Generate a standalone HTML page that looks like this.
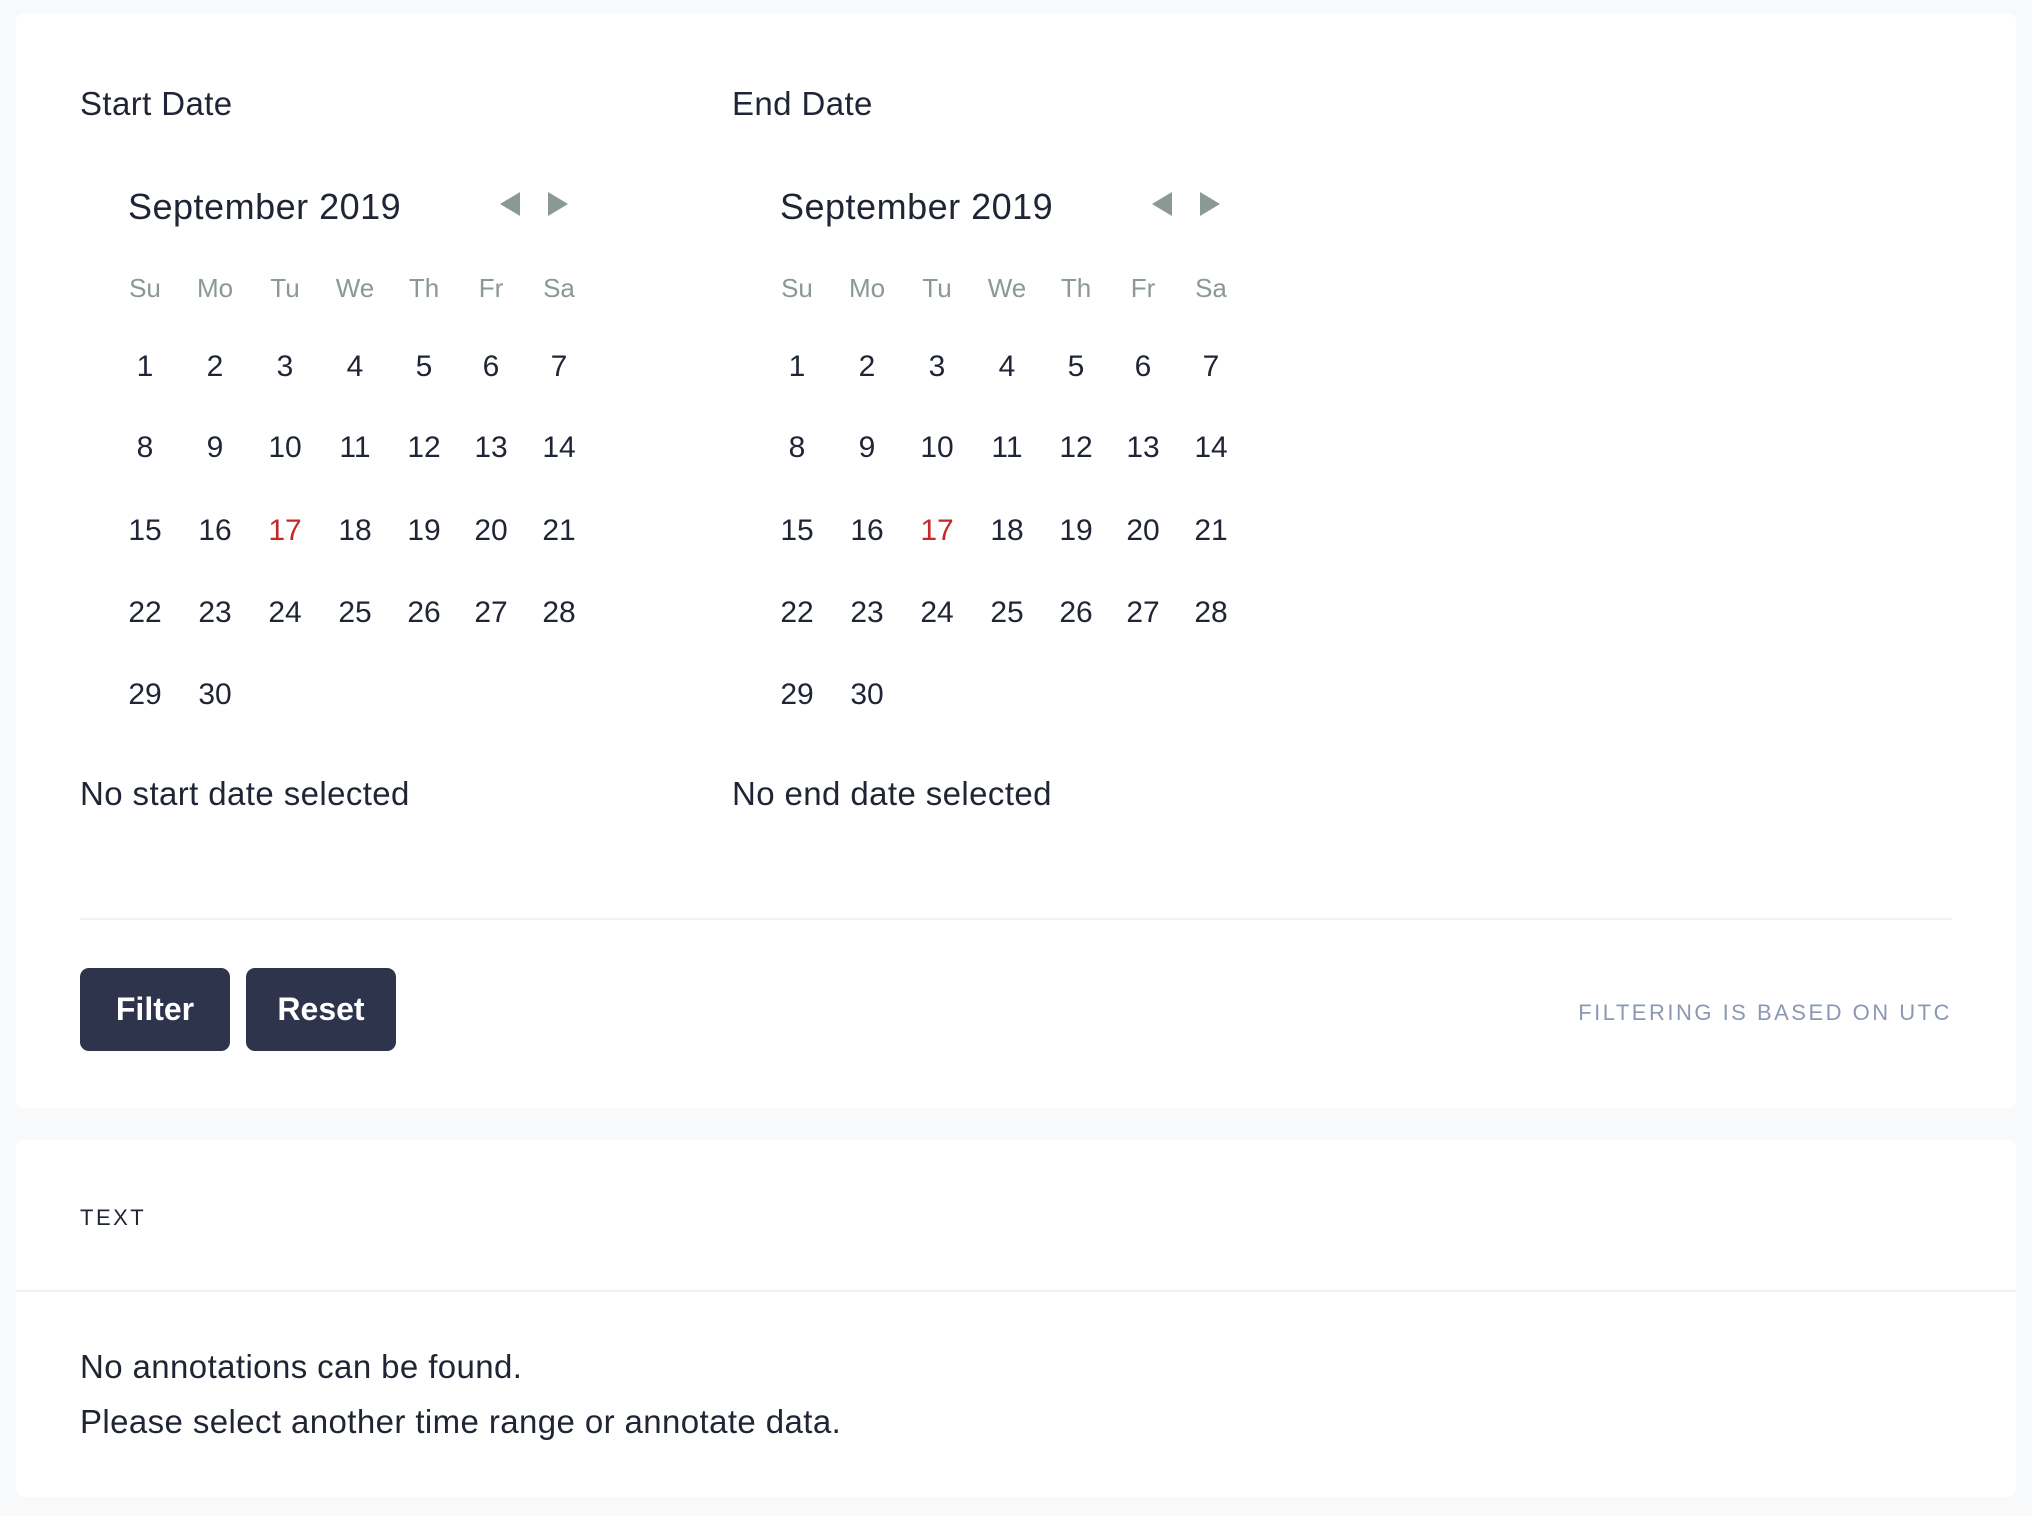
<!DOCTYPE html>
<html><head><meta charset="utf-8"><style>
*{margin:0;padding:0;box-sizing:border-box}
body{width:2032px;height:1516px;background:#f8f9fb;position:relative;overflow:hidden;font-family:"Liberation Sans",sans-serif;color:#1f2535}
.card{position:absolute;left:16px;width:2000px;background:#fff;border-radius:8px}
.t{position:absolute;white-space:nowrap;line-height:40px}
.b{font-size:33px;letter-spacing:0.4px}
.c{position:absolute;width:60px;text-align:center;line-height:40px;font-size:30px}
.h{color:#8a9896;font-size:26px}
.btn{position:absolute;top:968px;height:83px;width:150px;background:#2d344b;border-radius:9px;color:#fff;font-size:32px;font-weight:bold;text-align:center;line-height:83px}
</style></head><body>
<div class="card" style="top:13px;height:1095px"></div>
<div class="card" style="top:1140px;height:357px"></div>

<div class="t b" style="left:80px;top:84px">Start Date</div>
<div class="t b" style="left:732px;top:84px">End Date</div>

<div id="cals"></div>

<div class="t b" style="left:80px;top:774px">No start date selected</div>
<div class="t b" style="left:732px;top:774px">No end date selected</div>

<div style="position:absolute;left:80px;top:918px;width:1872px;height:2px;background:#f1f2f5"></div>

<div class="btn" style="left:80px">Filter</div>
<div class="btn" style="left:246px">Reset</div>
<div class="t" style="right:80px;top:993px;font-size:22px;letter-spacing:2.5px;color:#8a98b3">FILTERING IS BASED ON UTC</div>

<div class="t" style="left:80px;top:1198px;font-size:22px;letter-spacing:2.5px">TEXT</div>
<div style="position:absolute;left:16px;top:1290px;width:2000px;height:2px;background:#f1f2f5"></div>
<div class="t b" style="left:80px;top:1347px">No annotations can be found.</div>
<div class="t b" style="left:80px;top:1402px">Please select another time range or annotate data.</div>

<script>
var cols=[145,215,285,355,424,491,559],rows=[367,448,531,613,695],hd=["Su","Mo","Tu","We","Th","Fr","Sa"];
var h="";
[0,652].forEach(function(o){
 h+='<div class="t" style="left:'+(128+o)+'px;top:187px;font-size:36px;letter-spacing:0.5px">September 2019</div>';
 h+='<svg style="position:absolute;left:'+(498+o)+'px;top:190px" width="72" height="28"><polygon points="2,14 22,2 22,26" fill="#8a9896"/><polygon points="50,2 70,14 50,26" fill="#8a9896"/></svg>';
 for(var i=0;i<7;i++)h+='<div class="c h" style="left:'+(cols[i]-30+o)+'px;top:268px">'+hd[i]+'</div>';
 for(var d=1;d<=30;d++){var k=d-1,r=Math.floor(k/7),c=k%7;
  h+='<div class="c" style="left:'+(cols[c]-30+o)+'px;top:'+(rows[r]-20)+'px'+(d==17?';color:#c62828':'')+'">'+d+'</div>';}
});
document.getElementById("cals").innerHTML=h;
</script>
</body></html>
